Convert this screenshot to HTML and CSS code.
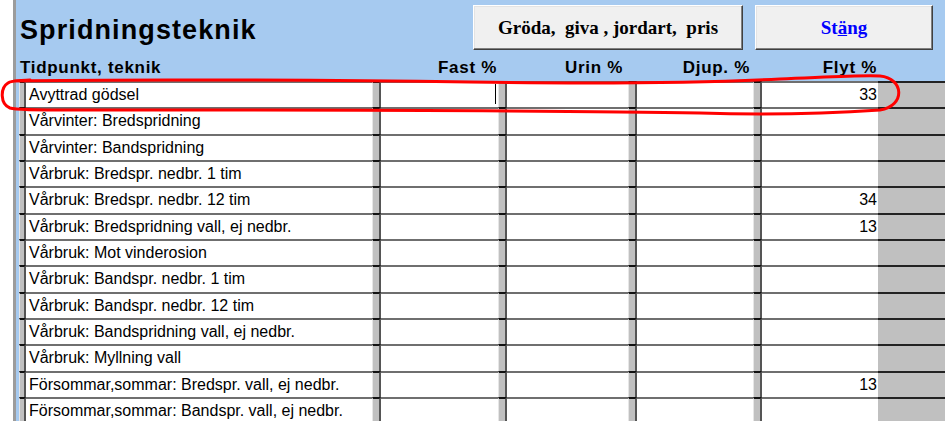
FILE: index.html
```html
<!DOCTYPE html>
<html lang="sv">
<head>
    <meta charset="UTF-8">
    <title>Spridningsteknik</title>
    <link rel="stylesheet" href="styles.css">
</head>
<body>
    <div id="page">
        <div id="form">
            <div id="header">
                <div class="top">
                    <h1>Spridningsteknik</h1>
                    <div class="buttons">
                        <button class="btn wide">Gröda,  giva , jordart,  pris</button>
                        <button class="btn close">St<u>ä</u>ng</button>
                    </div>
                </div>
                <div class="labels">
                    <span class="lbl first">Tidpunkt, teknik</span>
                    <span class="lbl fast">Fast %</span>
                    <span class="lbl urin">Urin %</span>
                    <span class="lbl djup">Djup. %</span>
                    <span class="lbl flyt">Flyt %</span>
                </div>
            </div>

            <div id="rows">
                <div class="row"><i class="pad"></i><i class="sep"></i><div class="cell name">Avyttrad gödsel</div><i class="sep"></i><div class="cell"><b class="caret"></b></div><i class="sep"></i><div class="cell"></div><i class="sep"></i><div class="cell"></div><i class="sep"></i><div class="cell num">33</div><div class="rest"></div></div>
                <div class="row"><i class="pad"></i><i class="sep"></i><div class="cell name">Vårvinter: Bredspridning</div><i class="sep"></i><div class="cell"></div><i class="sep"></i><div class="cell"></div><i class="sep"></i><div class="cell"></div><i class="sep"></i><div class="cell num"></div><div class="rest"></div></div>
                <div class="row"><i class="pad"></i><i class="sep"></i><div class="cell name">Vårvinter: Bandspridning</div><i class="sep"></i><div class="cell"></div><i class="sep"></i><div class="cell"></div><i class="sep"></i><div class="cell"></div><i class="sep"></i><div class="cell num"></div><div class="rest"></div></div>
                <div class="row"><i class="pad"></i><i class="sep"></i><div class="cell name">Vårbruk: Bredspr. nedbr. 1 tim</div><i class="sep"></i><div class="cell"></div><i class="sep"></i><div class="cell"></div><i class="sep"></i><div class="cell"></div><i class="sep"></i><div class="cell num"></div><div class="rest"></div></div>
                <div class="row"><i class="pad"></i><i class="sep"></i><div class="cell name">Vårbruk: Bredspr. nedbr. 12 tim</div><i class="sep"></i><div class="cell"></div><i class="sep"></i><div class="cell"></div><i class="sep"></i><div class="cell"></div><i class="sep"></i><div class="cell num">34</div><div class="rest"></div></div>
                <div class="row"><i class="pad"></i><i class="sep"></i><div class="cell name">Vårbruk: Bredspridning vall, ej nedbr.</div><i class="sep"></i><div class="cell"></div><i class="sep"></i><div class="cell"></div><i class="sep"></i><div class="cell"></div><i class="sep"></i><div class="cell num">13</div><div class="rest"></div></div>
                <div class="row"><i class="pad"></i><i class="sep"></i><div class="cell name">Vårbruk: Mot vinderosion</div><i class="sep"></i><div class="cell"></div><i class="sep"></i><div class="cell"></div><i class="sep"></i><div class="cell"></div><i class="sep"></i><div class="cell num"></div><div class="rest"></div></div>
                <div class="row"><i class="pad"></i><i class="sep"></i><div class="cell name">Vårbruk: Bandspr. nedbr. 1 tim</div><i class="sep"></i><div class="cell"></div><i class="sep"></i><div class="cell"></div><i class="sep"></i><div class="cell"></div><i class="sep"></i><div class="cell num"></div><div class="rest"></div></div>
                <div class="row"><i class="pad"></i><i class="sep"></i><div class="cell name">Vårbruk: Bandspr. nedbr. 12 tim</div><i class="sep"></i><div class="cell"></div><i class="sep"></i><div class="cell"></div><i class="sep"></i><div class="cell"></div><i class="sep"></i><div class="cell num"></div><div class="rest"></div></div>
                <div class="row"><i class="pad"></i><i class="sep"></i><div class="cell name">Vårbruk: Bandspridning vall, ej nedbr.</div><i class="sep"></i><div class="cell"></div><i class="sep"></i><div class="cell"></div><i class="sep"></i><div class="cell"></div><i class="sep"></i><div class="cell num"></div><div class="rest"></div></div>
                <div class="row"><i class="pad"></i><i class="sep"></i><div class="cell name">Vårbruk: Myllning vall</div><i class="sep"></i><div class="cell"></div><i class="sep"></i><div class="cell"></div><i class="sep"></i><div class="cell"></div><i class="sep"></i><div class="cell num"></div><div class="rest"></div></div>
                <div class="row"><i class="pad"></i><i class="sep"></i><div class="cell name">Försommar,sommar: Bredspr. vall, ej nedbr.</div><i class="sep"></i><div class="cell"></div><i class="sep"></i><div class="cell"></div><i class="sep"></i><div class="cell"></div><i class="sep"></i><div class="cell num">13</div><div class="rest"></div></div>
                <div class="row"><i class="pad"></i><i class="sep"></i><div class="cell name">Försommar,sommar: Bandspr. vall, ej nedbr.</div><i class="sep"></i><div class="cell"></div><i class="sep"></i><div class="cell"></div><i class="sep"></i><div class="cell"></div><i class="sep"></i><div class="cell num"></div><div class="rest"></div></div>
            </div>
        </div>

        <!-- hand drawn red marking round the first row -->
        <svg class="mark" width="945" height="421" viewBox="0 0 945 421">
            <path d="M14 81 C120 79 330 80 470 82 C600 84 700 83 780 79 C830 77 860 75 880 76 C904 78 906 106 880 110 C820 114 760 115 700 113 C560 110 300 110 120 110 C60 110 20 111 10 108 C0 104 0 88 8 83 C12 80 20 81 30 80"/>
        </svg>
    </div>
</body>
</html>
```

FILE: styles.css
```css
html, body {
    margin: 0;
    background: #fff;
    height: 421px;
    overflow: hidden;
}
#page {
    position: relative;
    padding-left: 13px;
    height: 421px;
}
#form {
    border-left: 3px solid #9c9c9c;
    height: 421px;
    background: #a6caf0;
    font-family: "Liberation Sans", Arial, sans-serif;
}

/* header */
#header {
    height: 81px;
    display: flex;
    flex-direction: column;
}
.top {
    display: flex;
    justify-content: space-between;
    align-items: flex-start;
    height: 58px;
    padding: 0 12px 0 4px;
}
h1 {
    margin: 15px 0 0;
    font-size: 27px;
    line-height: 30px;
    letter-spacing: 1.1px;
    font-weight: bold;
}
.buttons {
    display: flex;
    gap: 12px;
    margin-top: 5px;
}
.btn {
    height: 45px;
    background: #f0f0f0;
    border: 1px solid;
    border-color: #fff #404040 #404040 #fff;
    box-shadow: inset -1px -1px #808080, inset 1px 1px #e3e3e3;
    font-family: "Liberation Serif", "Times New Roman", serif;
    font-weight: bold;
    font-size: 19px;
    white-space: pre;
    padding: 0;
}
.wide {
    width: 270px;
}
.close {
    width: 178px;
    color: #0000ff;
}

.labels,
.row {
    display: grid;
    grid-template-columns: 3px 7px 346px 9px 117px 9px 121px 9px 116px 9px 116px 1fr;
}
.labels {
    height: 23px;
    font-weight: bold;
    font-size: 17px;
    letter-spacing: 0.7px;
    line-height: 20px;
}
.lbl {
    text-align: right;
    padding-right: 1px;
}
.first {
    grid-column: 1 / 4;
    text-align: left;
    padding-left: 4px;
}
.fast { grid-column: 5; }
.urin { grid-column: 7; padding-right: 5px; }
.djup { grid-column: 9; padding-right: 3px; }
.flyt { grid-column: 11; }

/* rows */
.row {
    height: 26.33px;
    font-size: 16px;
    line-height: 24px;
}
.sep {
    background: #c0c0c0;
    border-left: 1px solid #e6e6e6;
    border-right: 2px solid #555;
    border-top: 2px solid #111;
}
.cell {
    position: relative;
    background: #fff;
    border-top: 2px solid #6f6f6f;
    white-space: nowrap;
    overflow: hidden;
}
.name {
    padding-left: 3px;
}
.num {
    text-align: right;
    padding-right: 1px;
}
.rest {
    background: #c0c0c0;
    border-top: 2px solid #222;
}
.caret {
    position: absolute;
    right: 2px;
    top: 1px;
    width: 1px;
    height: 20px;
    background: #000;
}

.mark {
    position: absolute;
    left: 0;
    top: 0;
    pointer-events: none;
}
.mark path {
    fill: none;
    stroke: #ff0000;
    stroke-width: 3;
    stroke-linecap: round;
}
```
